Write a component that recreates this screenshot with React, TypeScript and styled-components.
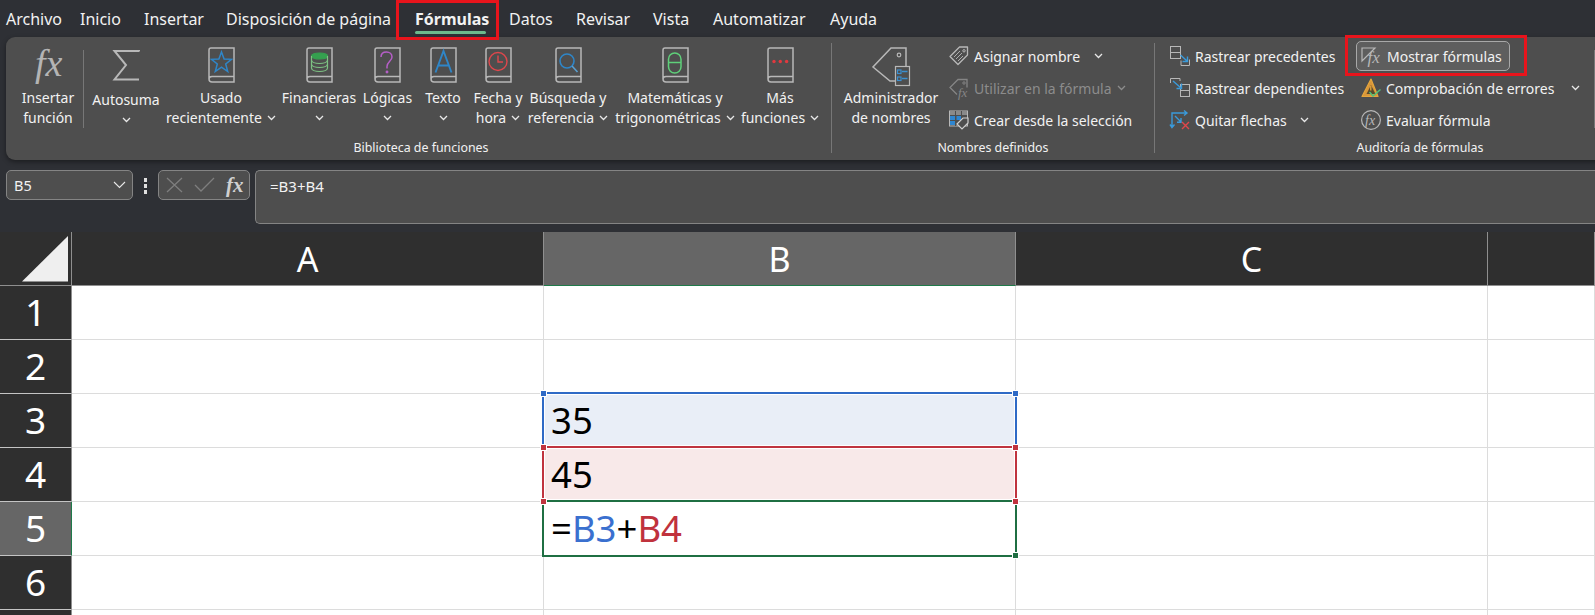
import React from "react";
import styled, { createGlobalStyle } from "styled-components";

const GlobalStyle = createGlobalStyle`
  html, body { margin: 0; padding: 0; height: 100%; overflow: hidden; background: #2e3035; }
  body { font-family: "Noto Sans", "Open Sans", sans-serif; color: #f2f2f2; }
`;

const Page = styled.div`
  width: 1595px;
  height: 615px;
  overflow: hidden;
  position: relative;
  background: #2e3035;
`;

const TabBar = styled.nav`
  display: flex;
  height: 37px;
  padding-left: 6px;
  font-size: 16px;
`;

const Tab = styled.div<{ $w: number; $active?: boolean }>`
  position: relative;
  width: ${(p) => p.$w}px;
  height: 37px;
  line-height: 38px;
  white-space: nowrap;
  font-weight: ${(p) => (p.$active ? 700 : 400)};
  ${(p) =>
    p.$active &&
    `&::after {
      content: "";
      position: absolute;
      left: 0;
      right: 23px;
      top: 31px;
      height: 3px;
      border-radius: 2px;
      background: #6cb98c;
    }`}
`;

const Callout = styled.div<{ $x: number; $y: number; $w: number; $h: number }>`
  position: absolute;
  left: ${(p) => p.$x}px;
  top: ${(p) => p.$y}px;
  width: ${(p) => p.$w}px;
  height: ${(p) => p.$h}px;
  box-sizing: border-box;
  border: 3px solid #e8141c;
  z-index: 5;
`;

const Ribbon = styled.section`
  display: flex;
  margin-left: 6px;
  width: 1700px;
  height: 123px;
  border-radius: 9px;
  background: #4e4e4e;
  box-shadow: 0 2px 5px rgba(0, 0, 0, 0.4);
`;

const Group = styled.div<{ $w: number; $pad?: number }>`
  width: ${(p) => p.$w}px;
  box-sizing: border-box;
  padding: 10px 0 0 ${(p) => p.$pad ?? 0}px;
  flex-shrink: 0;
`;

const GroupBody = styled.div`
  display: flex;
  height: 91px;
`;

const GroupLabel = styled.div<{ $shift?: number }>`
  height: 20px;
  line-height: 20px;
  font-size: 12.4px;
  text-align: center;
  color: #f2f2f2;
  white-space: nowrap;
  padding-right: ${(p) => p.$shift ?? 0}px;
`;

const GroupDivider = styled.div`
  width: 1px;
  height: 110px;
  margin-top: 6px;
  background: #777;
  flex-shrink: 0;
`;

const InnerDivider = styled.div<{ $l: number; $r: number }>`
  width: 1px;
  height: 78px;
  margin: 3px ${(p) => p.$r}px 0 ${(p) => p.$l}px;
  background: #777;
  flex-shrink: 0;
`;

const BigButton = styled.div<{ $w: number }>`
  width: ${(p) => p.$w}px;
  flex-shrink: 0;
  display: flex;
  flex-direction: column;
  align-items: center;
  font-size: 14px;
  line-height: 20px;
  white-space: nowrap;
  text-align: center;
`;

const BigIcon = styled.div`
  height: 36px;
  margin-bottom: 5px;
  display: flex;
  align-items: flex-start;
  justify-content: center;
  svg {
    overflow: visible;
  }
`;

const LabelLine = styled.div<{ $nudge?: number }>`
  display: flex;
  align-items: center;
  justify-content: center;
  height: 20px;
  gap: 5px;
  margin-top: ${(p) => p.$nudge ?? 0}px;
`;

const SmallStack = styled.div<{ $w?: number; $ml?: number }>`
  display: flex;
  flex-direction: column;
  width: ${(p) => (p.$w ? `${p.$w}px` : "auto")};
  margin: -7px 0 0 ${(p) => p.$ml ?? 0}px;
  flex-shrink: 0;
`;

const SmallButton = styled.div<{ $off?: boolean; $pad?: number }>`
  display: flex;
  align-items: center;
  height: 32px;
  padding-left: ${(p) => p.$pad ?? 0}px;
  gap: 5px;
  font-size: 14px;
  white-space: nowrap;
  color: ${(p) => (p.$off ? "#8c8c8c" : "#f2f2f2")};
  svg {
    overflow: visible;
    flex-shrink: 0;
  }
`;

const ToggledButton = styled(SmallButton)`
  box-sizing: border-box;
  width: 154px;
  height: 30px;
  margin: 1px 0;
  padding-left: 4px;
  border: 1px solid #a8a8a8;
  border-radius: 5px;
  background: #5e5e5e;
`;

const CaretGap = styled.span<{ $ml: number }>`
  display: inline-flex;
  margin-left: ${(p) => p.$ml}px;
`;

const FormulaRow = styled.div`
  display: flex;
  align-items: flex-start;
  height: 62px;
  padding: 10px 0 0 6px;
  box-sizing: content-box;
`;

const Field = styled.div`
  box-sizing: border-box;
  height: 30px;
  border: 1px solid #848484;
  border-radius: 5px;
  background: #4e4e4e;
  display: flex;
  align-items: center;
`;

const NameBox = styled(Field)`
  width: 127px;
  padding: 0 6px 0 7px;
  justify-content: space-between;
  font-size: 14.5px;
`;

const Grip = styled.div`
  display: flex;
  flex-direction: column;
  gap: 2px;
  width: 25px;
  padding-top: 8px;
  align-items: center;
`;

const GripDot = styled.span`
  width: 3px;
  height: 4px;
  background: #e0e0e0;
`;

const FormulaButtons = styled(Field)`
  width: 92px;
  padding-left: 7px;
  gap: 11px;
`;

const FormulaFx = styled.span`
  font-family: "Liberation Serif", serif;
  font-style: italic;
  font-weight: 700;
  font-size: 21px;
  color: #d0d0d0;
`;

const FormulaInput = styled.div`
  box-sizing: border-box;
  margin-left: 5px;
  flex: 1;
  height: 54px;
  border: 1px solid #848484;
  border-right: 0;
  border-radius: 5px 0 0 5px;
  background: #4e4e4e;
  padding: 5px 0 0 14px;
  font-size: 15px;
  line-height: 20px;
`;

const Sheet = styled.div`
  display: grid;
  grid-template-columns: 72px 472px 472px 472px 1fr;
  grid-template-rows: repeat(8, 54px);
  background: #fff;
`;

const Corner = styled.div`
  background: #2f2f2f;
  border-right: 1px solid #8f8f8f;
  border-bottom: 1px solid #8f8f8f;
  box-sizing: border-box;
  display: flex;
`;

const ColHeader = styled.div<{ $sel?: boolean }>`
  box-sizing: border-box;
  background: ${(p) => (p.$sel ? "#666" : "#2f2f2f")};
  border-right: 1px solid #8f8f8f;
  border-bottom: 1px solid ${(p) => (p.$sel ? "#1f7a4a" : "#8f8f8f")};
  font-size: 34px;
  line-height: 54px;
  text-align: center;
  color: #fff;
`;

const RowHeader = styled.div<{ $sel?: boolean }>`
  box-sizing: border-box;
  background: ${(p) => (p.$sel ? "#666" : "#2f2f2f")};
  border-right: 1px solid ${(p) => (p.$sel ? "#1f7a4a" : "#8f8f8f")};
  border-bottom: 1px solid #c4c4c4;
  font-size: 37px;
  line-height: 51px;
  text-align: center;
  color: #fff;
`;

const Cell = styled.div<{ $bg?: string }>`
  position: relative;
  box-sizing: border-box;
  background: ${(p) => p.$bg ?? "#fff"};
  border-right: 1px solid #dcdcdc;
  border-bottom: 1px solid #dcdcdc;
  padding-left: 7px;
  font-size: 36.5px;
  line-height: 52px;
  color: #000;
`;

const Range = styled.div<{ $color: string; $last?: boolean }>`
  position: absolute;
  top: -2px;
  left: -2px;
  right: -2px;
  bottom: ${(p) => (p.$last ? "-2px" : "-1px")};
  border: 2px solid ${(p) => p.$color};
  box-shadow: inset 0 0 0 1px #fff;
  z-index: 1;
`;

const Handle = styled.span<{ $color: string; $x: "l" | "r"; $y: "t" | "b" }>`
  position: absolute;
  width: 5px;
  height: 5px;
  background: ${(p) => p.$color};
  border: 1px solid #fff;
  z-index: 2;
  ${(p) => (p.$x === "l" ? "left: -4px;" : "right: -4px;")}
  ${(p) => (p.$y === "t" ? "top: -4px;" : "bottom: -4px;")}
`;

const RefB3 = styled.span`
  color: #3a70cf;
`;
const RefB4 = styled.span`
  color: #c0323d;
`;

const BLUE = "#2f6ac6";
const RED = "#c0343f";
const GREEN = "#1f6f43";
const GREY = "#b8b8b8";
const ARROW = "#3a9ada";

const Caret = ({ color = "#e8e8e8", big }: { color?: string; big?: boolean }) =>
  big ? (
    <svg width="13" height="8" viewBox="0 0 13 8">
      <path d="M1 1l5.500 5.500L12 1" fill="none" stroke={color} strokeWidth="1.100" />
    </svg>
  ) : (
    <svg width="9" height="6" viewBox="0 0 9 6">
      <path d="M1 1l3.500 3.500L8 1" fill="none" stroke={color} strokeWidth="1.300" />
    </svg>
  );

const Book = ({ children }: { children?: React.ReactNode }) => (
  <svg width="27" height="36" viewBox="0 0 27 36">
    <path d="M1 32V3q0-2 2-2h23v34H4q-3 0-3-3 0-2.500 3-2.500h22" fill="none" stroke={GREY} strokeWidth="1.500" />
    {children}
  </svg>
);

const FxBig = () => (
  <svg width="30" height="36" viewBox="0 0 30 36">
    <text x="2" y="29" fontFamily="Liberation Serif" fontStyle="italic" fontSize="38" fill="#b4b4b4">
      fx
    </text>
  </svg>
);

const Sigma = () => (
  <svg width="27" height="36" viewBox="0 0 27 36">
    <path d="M26 4.500V4H1.500L13 18 1.500 32.500H26" fill="none" stroke={GREY} strokeWidth="2" />
  </svg>
);

const NameTag = () => (
  <svg width="38" height="40" viewBox="0 0 38 40">
    <path d="M24 34H18L1 20 19 1h15v20" fill="none" stroke={GREY} strokeWidth="1.500" />
    <circle cx="27" cy="8" r="1.800" fill="none" stroke={GREY} strokeWidth="1.200" />
    <rect x="23.500" y="19.500" width="14" height="19" fill="#4e4e4e" stroke={GREY} strokeWidth="1.200" />
    <rect x="25.500" y="23" width="3.500" height="3.500" fill="none" stroke="#3a8fd0" strokeWidth="1.200" />
    <rect x="25.500" y="30" width="3.500" height="3.500" fill="none" stroke="#3a8fd0" strokeWidth="1.200" />
    <path d="M30 24.500h5.500M30 31.500h5.500" stroke="#3a8fd0" strokeWidth="1.400" />
  </svg>
);

const TagIcon = () => (
  <svg width="20" height="20" viewBox="0 0 20 20">
    <path d="M1 10.500L10.500 1H18.500V9L9 18.500Z" fill="none" stroke={GREY} strokeWidth="1.300" strokeLinejoin="round" />
    <circle cx="15" cy="4.800" r="1.200" fill="none" stroke={GREY} />
    <path d="M5 11l6-6M7 13l6-6M9 15l5-5" stroke={GREY} strokeWidth="0.900" />
  </svg>
);

const TagFxIcon = () => (
  <svg width="20" height="20" viewBox="0 0 20 20">
    <path d="M8 16.500L1 9.500 9 1.500h9v8" fill="none" stroke="#858585" strokeWidth="1.300" />
    <circle cx="15" cy="5" r="1.200" fill="none" stroke="#858585" />
    <text x="9" y="19" fontFamily="Liberation Serif" fontStyle="italic" fontSize="13" fill="#858585">
      fx
    </text>
  </svg>
);

const TableTagIcon = () => (
  <svg width="20" height="20" viewBox="0 0 20 20">
    <rect x="0.500" y="1" width="18" height="15" fill="#4e4e4e" stroke={GREY} />
    <path d="M1 1h17v4H1z" fill="#8a8a8a" />
    <path d="M1 6h5.500v4H1zM1 11h5.500v4H1zM7.500 6H12v4H7.500z" fill="#2f86d0" />
    <path d="M6.500 1v15M12.500 1v9M1 5.500h17M1 10.500h11" stroke="#4e4e4e" />
    <path d="M8 14l6-6h5v5l-6 6z" fill="#4e4e4e" stroke="#d0d0d0" strokeWidth="1.200" />
  </svg>
);

const TracePrecedents = () => (
  <svg width="20" height="20" viewBox="0 0 20 20">
    <rect x="0.500" y="0.500" width="10" height="6" fill="none" stroke={GREY} />
    <rect x="0.500" y="6.500" width="10" height="6" fill="none" stroke={GREY} />
    <path d="M11 14.500v5h8.500v-6" fill="none" stroke={GREY} />
    <path d="M10.500 9l6.500 6M17.500 10.500v5h-5" fill="none" stroke={ARROW} strokeWidth="1.400" />
  </svg>
);

const TraceDependents = () => (
  <svg width="20" height="20" viewBox="0 0 20 20">
    <path d="M0.500 5V0.500H10V3" fill="none" stroke={GREY} />
    <rect x="10.500" y="6.500" width="9" height="6" fill="none" stroke={GREY} />
    <rect x="10.500" y="12.500" width="9" height="6" fill="none" stroke={GREY} />
    <path d="M3 3l8 7M11.500 5.500v5h-5" fill="none" stroke={ARROW} strokeWidth="1.400" />
  </svg>
);

const RemoveArrows = () => (
  <svg width="20" height="20" viewBox="0 0 20 20">
    <path d="M2 17V3h15M14 0.500L17 3l-3 2.500M0 14.500L2 17.500l2.500-3M5 6l6 6M11 8v4.300H7" fill="none" stroke={ARROW} strokeWidth="1.400" />
    <path d="M12 12l7 7M19 12l-7 7" stroke="#e0474c" strokeWidth="1.400" />
  </svg>
);

const ShowFormulas = () => (
  <svg width="21" height="22" viewBox="0 0 21 22">
    <path d="M1 3h13L1 16z" fill="none" stroke={GREY} strokeWidth="1.200" />
    <text x="6.500" y="18" fontFamily="Liberation Serif" fontStyle="italic" fontSize="17" fill="#b8b8b8">
      fx
    </text>
  </svg>
);

const ErrorCheck = () => (
  <svg width="20" height="20" viewBox="0 0 20 20">
    <path d="M10 1L1 18.500h16z" fill="#d9973a" stroke="#e6a63c" strokeWidth="1.200" strokeLinejoin="round" />
    <path d="M10 7L5.500 16h9z" fill="#5a4a2c" />
    <path d="M9.800 8v4.500" stroke="#e6a63c" strokeWidth="1.300" />
    <path d="M8.500 14l3.500 4 7.500-6.500" fill="none" stroke="#4fc27a" strokeWidth="1.500" />
  </svg>
);

const EvalIcon = () => (
  <svg width="20" height="20" viewBox="0 0 20 20">
    <circle cx="10" cy="10" r="9.400" fill="none" stroke={GREY} strokeWidth="1.200" />
    <text x="4" y="14.500" fontFamily="Liberation Serif" fontStyle="italic" fontSize="14" fill="#b8b8b8">
      fx
    </text>
  </svg>
);

const bookGlyphs: Record<string, React.ReactNode> = {
  star: <path d="M13.500 5l2.600 7 7.400.3-5.800 4.700 2 7.500-6.200-4.300-6.200 4.300 2-7.500-5.800-4.700 7.400-.3z" fill="none" stroke="#2f86c8" strokeWidth="1.500" />,
  db: (
    <g fill="none" stroke="#7dc283" strokeWidth="1.200">
      <ellipse cx="13.500" cy="9" rx="8" ry="3" fill="#35a04f" stroke="#35a04f" />
      <path d="M5.500 9v12c0 2 3.500 3.500 8 3.500s8-1.500 8-3.500V9M5.500 13c0 2 3.500 3.500 8 3.500s8-1.500 8-3.500M5.500 17c0 2 3.500 3.500 8 3.500s8-1.500 8-3.500" />
    </g>
  ),
  help: (
    <g fill="none" stroke="#b65fc8" strokeWidth="1.500">
      <path d="M7 10c0-3.500 2.500-5 5.500-5s5.500 2 5.500 5c0 4-5 4.500-5 9.500v2" />
      <circle cx="13" cy="25" r="0.700" fill="#b65fc8" />
    </g>
  ),
  text: <path d="M5.500 25.500L13.500 4l8 21.500M8.300 18.500h10.400" fill="none" stroke="#2f86c8" strokeWidth="1.900" />,
  clock: (
    <g fill="none" stroke="#e0474c" strokeWidth="1.400">
      <circle cx="13" cy="14.500" r="9" />
      <path d="M13 8.500v6.500h5" />
    </g>
  ),
  search: (
    <g fill="none" stroke="#2f86c8" strokeWidth="1.600">
      <circle cx="12" cy="14" r="7" />
      <path d="M17 19l5.500 6" stroke="#5a9fd0" />
    </g>
  ),
  theta: (
    <g fill="none" stroke="#5fd07a" strokeWidth="1.500">
      <rect x="6.500" y="6" width="12.500" height="20" rx="6.200" />
      <path d="M6.500 15.500h12.500" />
    </g>
  ),
  more: (
    <g fill="#e0393f">
      <circle cx="7" cy="14.500" r="1.700" />
      <circle cx="13.300" cy="14.500" r="1.700" />
      <circle cx="19.600" cy="14.500" r="1.700" />
    </g>
  ),
};

const functions = [
  { w: 110, glyph: "star", lines: ["Usado", "recientemente"] },
  { w: 86, glyph: "db", lines: ["Financieras", ""] },
  { w: 51, glyph: "help", lines: ["Lógicas", ""] },
  { w: 60, glyph: "text", lines: ["Texto", ""] },
  { w: 50, glyph: "clock", lines: ["Fecha y", "hora"] },
  { w: 90, glyph: "search", lines: ["Búsqueda y", "referencia"] },
  { w: 124, glyph: "theta", lines: ["Matemáticas y", "trigonométricas"] },
  { w: 86, glyph: "more", lines: ["Más", "funciones"] },
];

const tabs: [string, number][] = [
  ["Archivo", 74],
  ["Inicio", 64],
  ["Insertar", 82],
  ["Disposición de página", 189],
  ["Fórmulas", 94],
  ["Datos", 67],
  ["Revisar", 77],
  ["Vista", 60],
  ["Automatizar", 117],
  ["Ayuda", 60],
];

const rows = [1, 2, 3, 4, 5, 6, 7];

const App = () => {
  return (
    <Page>
      <GlobalStyle />
      <TabBar>
        {tabs.map(([name, w]) => (
          <Tab key={name} $w={w} $active={name === "Fórmulas"}>
            {name}
          </Tab>
        ))}
      </TabBar>
      <Callout $x={396} $y={0} $w={103} $h={40} />
      <Callout $x={1345} $y={35} $w={182} $h={41} />

      <Ribbon>
        <Group $w={825} $pad={10}>
          <GroupBody>
            <BigButton $w={64}>
              <BigIcon>
                <FxBig />
              </BigIcon>
              <LabelLine>Insertar</LabelLine>
              <LabelLine>función</LabelLine>
            </BigButton>
            <InnerDivider $l={3} $r={2} />
            <BigButton $w={80}>
              <BigIcon>
                <Sigma />
              </BigIcon>
              <LabelLine $nudge={2}>Autosuma</LabelLine>
              <LabelLine>
                <Caret />
              </LabelLine>
            </BigButton>
            {functions.map((f) => (
              <BigButton key={f.glyph} $w={f.w}>
                <BigIcon>
                  <Book>{bookGlyphs[f.glyph]}</Book>
                </BigIcon>
                <LabelLine>{f.lines[0]}</LabelLine>
                <LabelLine>
                  {f.lines[1]}
                  <Caret />
                </LabelLine>
              </BigButton>
            ))}
          </GroupBody>
          <GroupLabel $shift={5}>Biblioteca de funciones</GroupLabel>
        </Group>
        <GroupDivider />
        <Group $w={322} $pad={11}>
          <GroupBody>
            <BigButton $w={96}>
              <BigIcon>
                <NameTag />
              </BigIcon>
              <LabelLine>Administrador</LabelLine>
              <LabelLine>de nombres</LabelLine>
            </BigButton>
            <SmallStack $ml={10}>
              <SmallButton>
                <TagIcon />
                Asignar nombre
                <CaretGap $ml={9}>
                  <Caret />
                </CaretGap>
              </SmallButton>
              <SmallButton $off>
                <TagFxIcon />
                Utilizar en la fórmula
                <CaretGap $ml={0}>
                  <Caret color="#8c8c8c" />
                </CaretGap>
              </SmallButton>
              <SmallButton>
                <TableTagIcon />
                Crear desde la selección
              </SmallButton>
            </SmallStack>
          </GroupBody>
          <GroupLabel $shift={11}>Nombres definidos</GroupLabel>
        </Group>
        <GroupDivider />
        <Group $w={524} $pad={15}>
          <GroupBody>
            <SmallStack $w={186}>
              <SmallButton>
                <TracePrecedents />
                Rastrear precedentes
              </SmallButton>
              <SmallButton>
                <TraceDependents />
                Rastrear dependientes
              </SmallButton>
              <SmallButton>
                <RemoveArrows />
                Quitar flechas
                <CaretGap $ml={8}>
                  <Caret />
                </CaretGap>
              </SmallButton>
            </SmallStack>
            <SmallStack $w={238}>
              <ToggledButton>
                <ShowFormulas />
                Mostrar fórmulas
              </ToggledButton>
              <SmallButton $pad={5}>
                <ErrorCheck />
                Comprobación de errores
                <CaretGap $ml={12}>
                  <Caret />
                </CaretGap>
              </SmallButton>
              <SmallButton $pad={5}>
                <EvalIcon />
                Evaluar fórmula
              </SmallButton>
            </SmallStack>
            <InnerDivider $l={0} $r={0} />
          </GroupBody>
          <GroupLabel $shift={9}>Auditoría de fórmulas</GroupLabel>
        </Group>
      </Ribbon>

      <FormulaRow>
        <NameBox>
          B5
          <Caret big />
        </NameBox>
        <Grip>
          <GripDot />
          <GripDot />
          <GripDot />
        </Grip>
        <FormulaButtons>
          <svg width="17" height="16" viewBox="0 0 17 16">
            <path d="M1 1l15 14M16 1L1 15" stroke="#7e7e7e" strokeWidth="1.300" />
          </svg>
          <svg width="21" height="16" viewBox="0 0 21 16">
            <path d="M1 8l6 6L20 1" fill="none" stroke="#7e7e7e" strokeWidth="1.300" />
          </svg>
          <FormulaFx>fx</FormulaFx>
        </FormulaButtons>
        <FormulaInput>=B3+B4</FormulaInput>
      </FormulaRow>

      <Sheet>
        <Corner>
          <svg width="70" height="52" viewBox="0 0 70 52">
            <path d="M22 49.500H68V4z" fill="#efefef" />
          </svg>
        </Corner>
        <ColHeader>A</ColHeader>
        <ColHeader $sel>B</ColHeader>
        <ColHeader>C</ColHeader>
        <ColHeader />
        {rows.map((r) => (
          <React.Fragment key={r}>
            <RowHeader $sel={r === 5}>{r < 7 ? r : ""}</RowHeader>
            <Cell />
            {r === 3 && (
              <Cell $bg="#e9eef7">
                35
                <Range $color={BLUE} />
                <Handle $color={BLUE} $x="l" $y="t" />
                <Handle $color={BLUE} $x="r" $y="t" />
              </Cell>
            )}
            {r === 4 && (
              <Cell $bg="#f8e9e9">
                45
                <Range $color={RED} />
                <Handle $color={RED} $x="l" $y="t" />
                <Handle $color={RED} $x="r" $y="t" />
              </Cell>
            )}
            {r === 5 && (
              <Cell>
                =<RefB3>B3</RefB3>+<RefB4>B4</RefB4>
                <Range $color={GREEN} $last />
                <Handle $color={RED} $x="l" $y="t" />
                <Handle $color={RED} $x="r" $y="t" />
                <Handle $color={GREEN} $x="r" $y="b" />
              </Cell>
            )}
            {r !== 3 && r !== 4 && r !== 5 && <Cell />}
            <Cell />
            <Cell />
          </React.Fragment>
        ))}
      </Sheet>
    </Page>
  );
};

export default App;
